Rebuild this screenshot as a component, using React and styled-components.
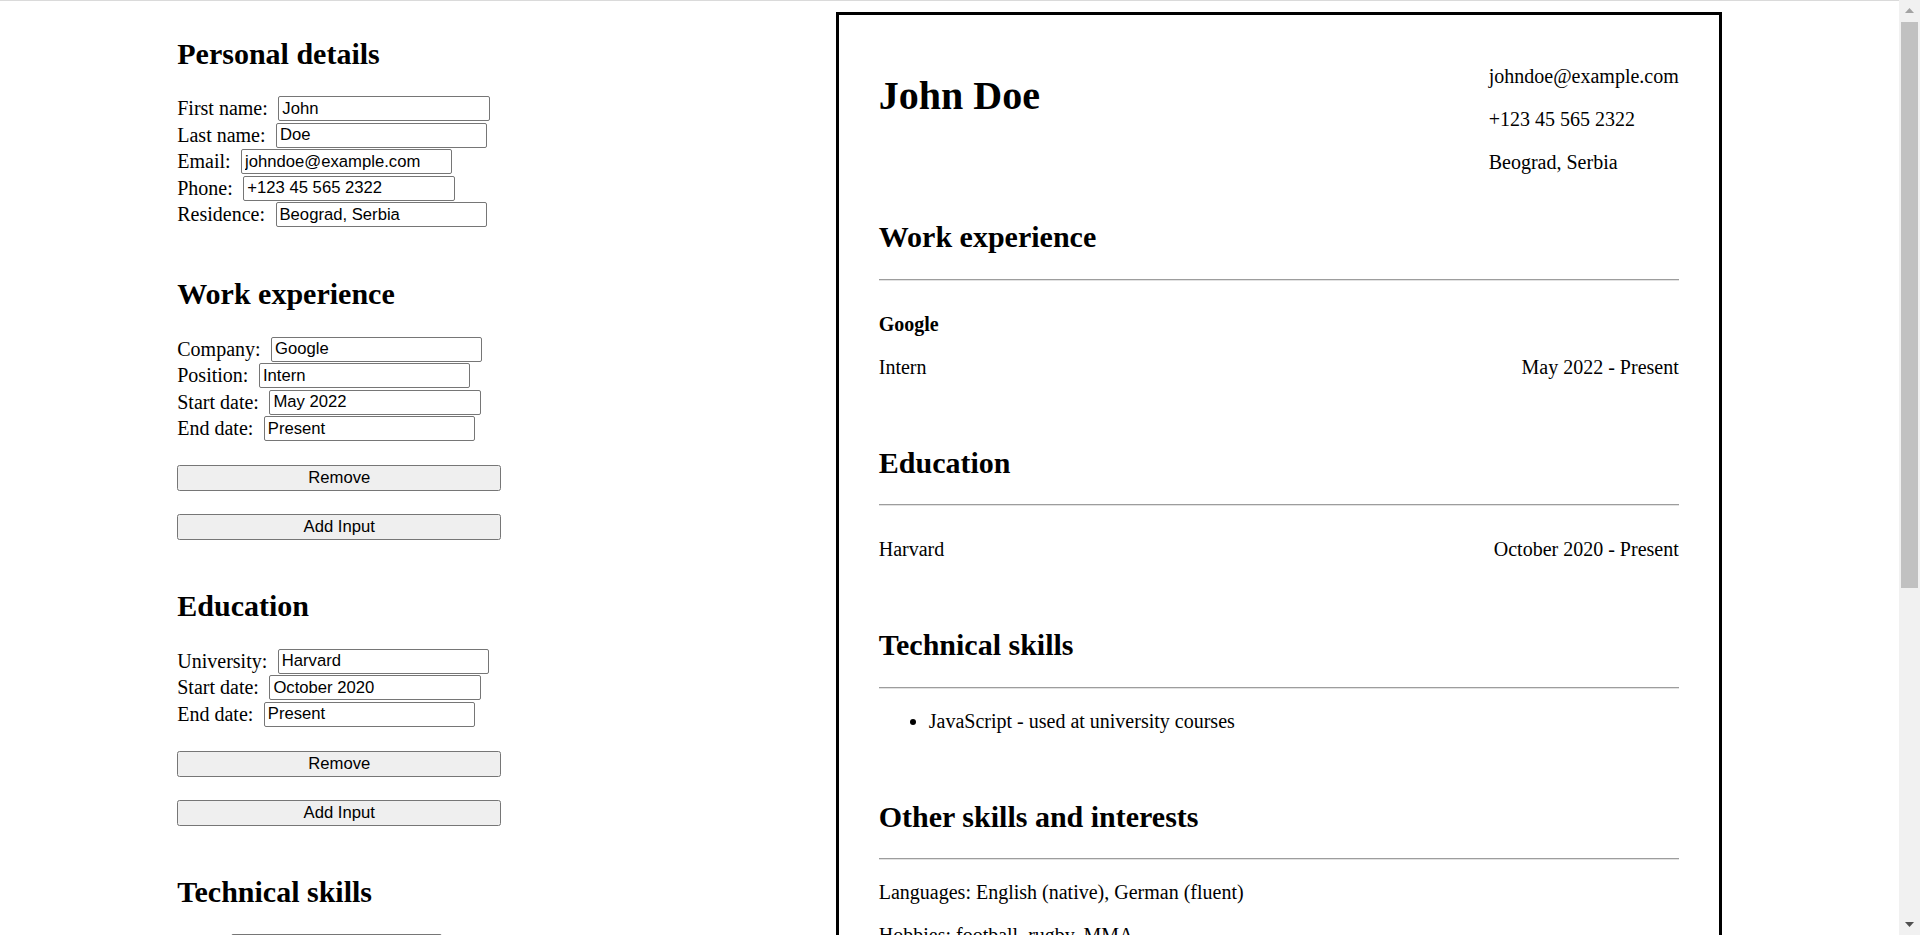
import React from 'react';
import styled, { createGlobalStyle } from 'styled-components';

const GlobalStyle = createGlobalStyle`
  *, *::before, *::after { box-sizing: border-box; }
  html, body { margin: 0; padding: 0; height: 100%; overflow: hidden; background: #fff; }
  body {
    font-family: "Liberation Serif", "Times New Roman", serif;
    font-size: 20px;
    line-height: 23px;
    color: #000;
  }
`;

const Screen = styled.div`
  display: flex;
  width: 100vw;
  height: 100vh;
  overflow: hidden;
`;

const Page = styled.div`
  flex: 1;
  min-width: 0;
  height: 100%;
  overflow: hidden;
  border-top: 1px solid #dadada;
  padding: 10px;
  display: flex;
  justify-content: space-around;
  align-items: flex-start;
`;

/* ---------- Form column ---------- */

const Form = styled.form`
  flex: none;
  width: 324px;
`;

const FormSection = styled.section`
  padding-bottom: 23.5px;
`;

const Heading = styled.h2`
  font-size: 30px;
  font-weight: bold;
  line-height: 34.5px;
  margin: 25.5px 0 24.5px;
`;

const Field = styled.div`
  display: flex;
  align-items: center;
  gap: 10.5px;
  height: 26.5px;
`;

const Label = styled.label`
  white-space: nowrap;
  font-size: 20px;
  line-height: 23px;
`;

const TextInput = styled.input`
  flex: none;
  width: 211.3px;
  height: 25px;
  margin: 0;
  padding: 0 3px;
  border: 1px solid #767676;
  border-radius: 2px;
  background: #fff;
  color: #000;
  font-family: "Liberation Sans", Arial, sans-serif;
  font-size: 16.67px;
  outline: none;
`;

const Button = styled.button`
  display: block;
  width: 100%;
  height: 26px;
  margin: 23px 0 0;
  padding: 0;
  border: 1px solid #767676;
  border-radius: 2.5px;
  background: #efefef;
  color: #000;
  font-family: "Liberation Sans", Arial, sans-serif;
  font-size: 16.67px;
  cursor: pointer;
`;

/* ---------- Resume preview ---------- */

const Resume = styled.article`
  flex: none;
  width: 886px;
  margin-top: 1px;
  border: 3px solid #000;
  padding: 30px 40px 40px;
`;

const Header = styled.header`
  display: flex;
  justify-content: space-between;
  align-items: flex-start;
`;

const Name = styled.h1`
  font-size: 40px;
  font-weight: bold;
  line-height: 46px;
  margin: 28px 0 26px;
`;

const Contact = styled.div`
  display: flex;
  flex-direction: column;
  gap: 20px;
  padding: 20px 0;
`;

const Text = styled.p`
  margin: 0;
  font-size: 20px;
  line-height: 23px;
  font-weight: ${(p) => (p.$bold ? 'bold' : 'normal')};
`;

const SectionTitle = styled.h2`
  font-size: 30px;
  font-weight: bold;
  line-height: 34.5px;
  margin: 26px 0 0;
`;

const Rule = styled.hr`
  margin: 24px 0 0;
  height: 0;
  border: 0;
  border-top: 1px solid #9d9d9d;
  border-bottom: 1px solid #e2e2e2;
`;

const SectionBody = styled.div`
  display: flex;
  flex-direction: column;
  gap: 20px;
  padding-top: 21px;
  padding-bottom: ${(p) => (p.$last ? 0 : 41)}px;
`;

const Entry = styled.div`
  display: flex;
  flex-direction: column;
  gap: 20px;
  margin-top: 11px;
`;

const EntryRow = styled.div`
  display: flex;
  justify-content: space-between;
  align-items: baseline;
`;

const Bullets = styled.ul`
  margin: 0;
  padding-left: 50px;
  list-style: disc;
`;

const Bullet = styled.li`
  line-height: 23px;
`;

/* ---------- Scrollbar (drawn) ---------- */

const ScrollRail = styled.div`
  flex: none;
  width: 21px;
  height: 100%;
  display: flex;
  flex-direction: column;
  background: #f1f1f1;
`;

const ArrowButton = styled.div`
  flex: none;
  height: 21px;
  display: flex;
  align-items: center;
  justify-content: center;
`;

const Track = styled.div`
  flex: 1;
  padding: 1px 2px 0;
`;

const Thumb = styled.div`
  height: 566px;
  background: #c1c1c1;
`;

const Arrow = ({ up, color }) => (
  <svg width="9" height="5" viewBox="0 0 9 5">
    {up ? (
      <polygon points="0,5 9,5 4.5,0" fill={color} />
    ) : (
      <polygon points="0,0 9,0 4.5,5" fill={color} />
    )}
  </svg>
);

const FieldRow = ({ label, value }) => (
  <Field>
    <Label>{label}</Label>
    <TextInput type="text" defaultValue={value} />
  </Field>
);

export default function App() {
  return (
    <>
      <GlobalStyle />
      <Screen>
        <Page>
          <Form onSubmit={(e) => e.preventDefault()}>
            <FormSection>
              <Heading>Personal details</Heading>
              <FieldRow label="First name:" value="John" />
              <FieldRow label="Last name:" value="Doe" />
              <FieldRow label="Email:" value="johndoe@example.com" />
              <FieldRow label="Phone:" value="+123 45 565 2322" />
              <FieldRow label="Residence:" value="Beograd, Serbia" />
            </FormSection>

            <FormSection>
              <Heading>Work experience</Heading>
              <FieldRow label="Company:" value="Google" />
              <FieldRow label="Position:" value="Intern" />
              <FieldRow label="Start date:" value="May 2022" />
              <FieldRow label="End date:" value="Present" />
              <Button type="button">Remove</Button>
              <Button type="button">Add Input</Button>
            </FormSection>

            <FormSection>
              <Heading>Education</Heading>
              <FieldRow label="University:" value="Harvard" />
              <FieldRow label="Start date:" value="October 2020" />
              <FieldRow label="End date:" value="Present" />
              <Button type="button">Remove</Button>
              <Button type="button">Add Input</Button>
            </FormSection>

            <FormSection>
              <Heading>Technical skills</Heading>
              <FieldRow label="Skill:" value="JavaScript" />
              <FieldRow label="Description:" value="used at university courses" />
              <Button type="button">Remove</Button>
              <Button type="button">Add Input</Button>
            </FormSection>

            <FormSection>
              <Heading>Other skills and interests</Heading>
              <FieldRow label="Languages:" value="English (native), German (fluent)" />
              <FieldRow label="Hobbies:" value="football, rugby, MMA" />
            </FormSection>
          </Form>

          <Resume>
            <Header>
              <Name>John Doe</Name>
              <Contact>
                <Text>johndoe@example.com</Text>
                <Text>+123 45 565 2322</Text>
                <Text>Beograd, Serbia</Text>
              </Contact>
            </Header>

            <section>
              <SectionTitle>Work experience</SectionTitle>
              <Rule />
              <SectionBody>
                <Entry>
                  <Text $bold>Google</Text>
                  <EntryRow>
                    <Text>Intern</Text>
                    <Text>May 2022 - Present</Text>
                  </EntryRow>
                </Entry>
              </SectionBody>
            </section>

            <section>
              <SectionTitle>Education</SectionTitle>
              <Rule />
              <SectionBody>
                <Entry>
                  <EntryRow>
                    <Text>Harvard</Text>
                    <Text>October 2020 - Present</Text>
                  </EntryRow>
                </Entry>
              </SectionBody>
            </section>

            <section>
              <SectionTitle>Technical skills</SectionTitle>
              <Rule />
              <SectionBody>
                <Bullets>
                  <Bullet>JavaScript - used at university courses</Bullet>
                </Bullets>
              </SectionBody>
            </section>

            <section>
              <SectionTitle>Other skills and interests</SectionTitle>
              <Rule />
              <SectionBody $last>
                <Text>Languages: English (native), German (fluent)</Text>
                <Text>Hobbies: football, rugby, MMA</Text>
              </SectionBody>
            </section>
          </Resume>
        </Page>

        <ScrollRail>
          <ArrowButton>
            <Arrow up color="#a3a3a3" />
          </ArrowButton>
          <Track>
            <Thumb />
          </Track>
          <ArrowButton>
            <Arrow color="#505050" />
          </ArrowButton>
        </ScrollRail>
      </Screen>
    </>
  );
}
